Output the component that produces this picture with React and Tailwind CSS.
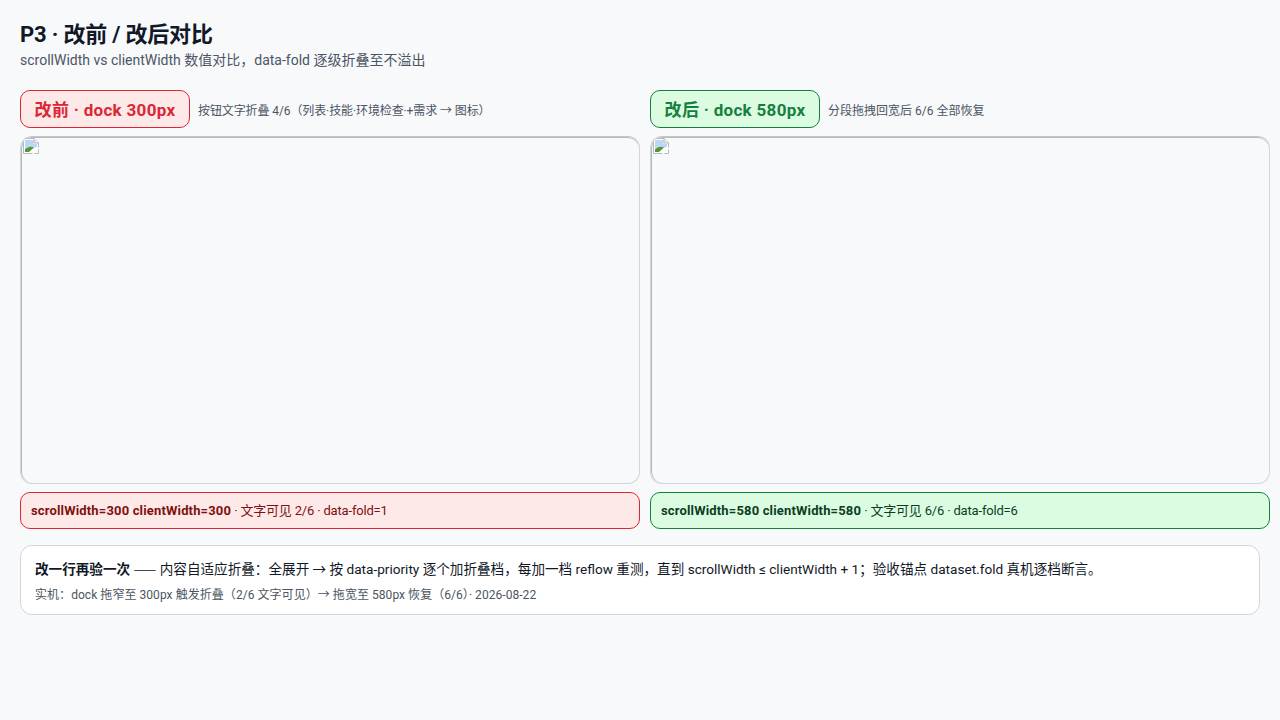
const font = "font-['Roboto','Noto_Sans_CJK_SC',sans-serif]";

// stand-in for the browser's broken image marker
const BrokenImage = () => (
  <svg width="16" height="16" viewBox="0 0 16 16" className="block">
    <path d="M0.5 0.5H11L15.5 5V15.5H0.5Z" fill="#fff" stroke="#b4b8bf" />
    <path d="M2 2H10.5V6H14V9L2 12Z" fill="#bcd6f5" />
    <path d="M2 14V11.5C5 8.5 8 8 11 9.5L6 14Z" fill="#4f9a2f" />
    <path d="M11 0.5V5H15.5" fill="#e8eaed" stroke="#b4b8bf" />
    <path d="M9 16L16 9V11L11 16Z" fill="#f8f9fb" />
  </svg>
);

const Shot = () => (
  <div className="h-[348px] rounded-xl border border-[#d1d5db] border-t-[#c4c6ca] overflow-hidden">
    <div className="h-full border border-[#b8b8b8] border-b-0 border-r-0 rounded-xl pl-px">
      <BrokenImage />
    </div>
  </div>
);

export default function App() {
  return (
    <div className={`w-[1280px] h-[720px] overflow-hidden bg-[#f8f9fb] p-5 ${font}`}>
      <h1 className="text-[22px] leading-[27px] font-bold text-[#111827] tracking-[-0.2px] mt-[1px]">P3 · 改前 / 改后对比</h1>
      <p className="text-sm leading-[18px] text-[#4b5563] mt-[3px]">
        scrollWidth vs clientWidth 数值对比，data-fold 逐级折叠至不溢出
      </p>

      <div className="grid grid-cols-[620px_620px] gap-x-[10px] mt-[21px]">
        {/* before */}
        <div>
          <div className="flex items-center gap-2 mb-2">
            <span className="w-[170px] h-[38px] pt-[3px] flex items-center justify-center rounded-[10px] border border-[#dc2636] bg-[#fee9e9] text-[#dc2636] text-[17px] tracking-[0.3px] font-bold">
              改前 · dock 300px
            </span>
            <span className="pt-[3px] text-xs tracking-[-0.1px] text-[#4b5563]">按钮文字折叠 4/6（列表·技能·环境检查·+需求 → 图标）</span>
          </div>
          <Shot />
          <div className="mt-2 h-[37px] flex items-center px-[10px] rounded-[10px] border border-[#dc2636] bg-[#fee9e9] text-[13px] tracking-[-0.18px] text-[#7f1010]">
            <b className="tracking-[0.16px]">scrollWidth=300 clientWidth=300</b>&nbsp;· 文字可见 2/6 · data-fold=1
          </div>
        </div>

        {/* after */}
        <div>
          <div className="flex items-center gap-2 mb-2">
            <span className="w-[170px] h-[38px] pt-[3px] flex items-center justify-center rounded-[10px] border border-[#15803d] bg-[#dcfce2] text-[#15803d] text-[17px] tracking-[0.3px] font-bold">
              改后 · dock 580px
            </span>
            <span className="pt-[3px] text-xs text-[#4b5563]">分段拖拽回宽后 6/6 全部恢复</span>
          </div>
          <Shot />
          <div className="mt-2 h-[37px] flex items-center px-[10px] rounded-[10px] border border-[#15803d] bg-[#dcfce2] text-[13px] tracking-[-0.18px] text-[#0b3d1e]">
            <b className="tracking-[0.16px]">scrollWidth=580 clientWidth=580</b>&nbsp;· 文字可见 6/6 · data-fold=6
          </div>
        </div>
      </div>

      <div className="mt-4 h-[70px] rounded-xl border border-[#d1d5db] bg-white px-[14px] pt-[13px]">
        <p className="text-[13.6px] leading-[18px] text-[#111827]">
          <b>改一行再验一次</b> <span className="font-['Noto_Sans_CJK_SC',sans-serif]">——</span> 内容自适应折叠：全展开 → 按 data-priority 逐个加折叠档，每加一档 reflow 重测，直到 scrollWidth ≤ clientWidth + 1；验收锚点 dataset.fold 真机逐档断言。
        </p>
        <p className="text-xs leading-4 tracking-[0.05px] text-[#4b5563] mt-[9px]">
          实机：dock 拖窄至 300px 触发折叠（2/6 文字可见）→ 拖宽至 580px 恢复（6/6）· 2026-08-22
        </p>
      </div>
    </div>
  );
}
